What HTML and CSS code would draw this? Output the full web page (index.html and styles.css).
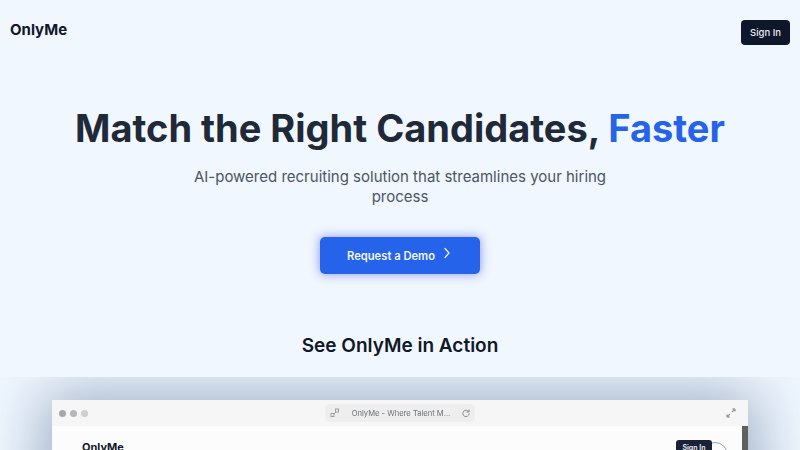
FILE: index.html
```html
<!DOCTYPE html>
<html lang="en">
<head>
<meta charset="utf-8">
<title>OnlyMe</title>
<link rel="stylesheet" href="styles.css">
</head>
<body>
<header class="topbar">
  <div class="logo">OnlyMe</div>
  <button class="signin">Sign In</button>
</header>
<main>
  <section class="hero">
    <h1>Match the Right Candidates, <span class="accent">Faster</span></h1>
    <p class="sub">AI-powered recruiting solution that streamlines your hiring process</p>
    <button class="cta"><span>Request a Demo</span>
      <svg class="chev" width="12" height="12" viewBox="0 0 12 12" fill="none" stroke="currentColor" stroke-width="1.2" stroke-linecap="round" stroke-linejoin="round"><path d="M4 1.5 8 6 4 10.5"/></svg>
    </button>
  </section>
  <h2 class="action">See OnlyMe in Action</h2>
  <section class="stage">
    <div class="window">
      <div class="chrome">
        <div class="dots"><i class="dot d1"></i><i class="dot d2"></i><i class="dot d3"></i></div>
        <div class="address">
          <svg width="10" height="10" viewBox="0 0 10 10" fill="none" stroke="#9a9ea3" stroke-width="1"><rect x="1" y="5.5" width="3" height="3"/><rect x="5.5" y="1" width="3" height="3"/><path d="M4 6 6 4"/></svg>
          <span class="addr-text">OnlyMe - Where Talent M...</span>
          <svg width="8" height="8" viewBox="0 0 10 10" fill="none" stroke="#85898e" stroke-width="1.2" stroke-linecap="round"><path d="M8.5 3.5A4 4 0 1 0 9 6"/><path d="M8.8 1v2.7H6.2"/></svg>
        </div>
        <svg class="expand" width="10" height="10" viewBox="0 0 10 10" fill="none" stroke="#9a9ea3" stroke-width="1.3"><path d="M6 4 9 1M9 1H6.5M9 1v2.5M4 6 1 9M1 9h2.5M1 9V6.5"/></svg>
      </div>
      <div class="inner">
        <div class="inner-logo">OnlyMe</div>
        <div class="inner-right">
          <span class="ring"></span>
          <button class="inner-sign">Sign In</button>
        </div>
        <span class="scroll"></span>
      </div>
    </div>
  </section>
</main>
</body>
</html>
```
FILE: styles.css
```css
* { box-sizing: border-box; }
html, body { margin: 0; padding: 0; }
body {
  width: 800px;
  height: 450px;
  overflow: hidden;
  background: #f0f7ff;
  font-family: Inter, "Liberation Sans", sans-serif;
  color: #111827;
}
.topbar {
  display: flex;
  justify-content: space-between;
  align-items: flex-start;
  padding: 20px 10px 0;
  height: 45px;
}
.logo {
  font-size: 15px;
  font-weight: 700;
  line-height: 20px;
  color: #0f172a;
}
.signin {
  width: 49px;
  height: 25px;
  padding: 0;
  border: 0;
  border-radius: 4px;
  background: #0f172a;
  color: #e8ebf0;
  font: 500 9.5px Inter, sans-serif;
}
.hero {
  display: flex;
  flex-direction: column;
  align-items: center;
  padding-top: 59px;
}
h1 {
  margin: 0;
  font-size: 38px;
  line-height: 48px;
  font-weight: 700;
  color: #1f2937;
  white-space: nowrap;
}
.accent { color: #2563eb; }
.sub {
  margin: 15px 0 0;
  width: 448px;
  text-align: center;
  font-size: 15px;
  line-height: 20px;
  color: #4b5563;
}
.cta {
  display: flex;
  align-items: center;
  justify-content: center;
  gap: 6px;
  margin-top: 30px;
  width: 160px;
  height: 37px;
  padding: 0;
  border: 0;
  border-radius: 5px;
  background: #2563eb;
  color: #f3f6fd;
  font: 600 11.2px Inter, sans-serif;
  box-shadow: 0 0 10px 1px rgba(68, 80, 245, .5);
}
.chev { margin-top: -6px; }
.action {
  margin: 60px 0 0;
  text-align: center;
  font-size: 19px;
  line-height: 24px;
  font-weight: 600;
  color: #111827;
}
.stage {
  margin-top: 19px;
  height: 73px;
  padding: 23px 52px 0;
  overflow: hidden;
}
.window {
  height: 100px;
  background: #fafafa;
  border-radius: 3px 3px 0 0;
  box-shadow: 0 4px 60px 10px rgba(40, 70, 110, .42);
}
.chrome {
  display: grid;
  grid-template-columns: 1fr 150px 1fr;
  align-items: center;
  height: 26px;
  padding: 0 7px;
  background: #f6f6f6;
  filter: blur(.3px);
}
.dots { display: flex; gap: 4px; }
.dot { width: 7px; height: 7px; border-radius: 50%; }
.d1 { background: #a5a7aa; }
.d2 { background: #b4b6b9; }
.d3 { background: #cdcfd1; }
.address {
  display: flex;
  align-items: center;
  justify-content: space-between;
  height: 18px;
  padding: 0 5px;
  border-radius: 5px;
  background: #eeeeef;
}
.addr-text { font-size: 7.6px; color: #6b7076; }
.expand { justify-self: end; margin-right: 5px; }
.inner {
  display: flex;
  justify-content: space-between;
  height: 74px;
  padding: 14px 0 0 30px;
  background: #fcfcfc;
  position: relative;
}
.inner-logo {
  font-size: 11px;
  line-height: 14px;
  font-weight: 700;
  color: #111827;
}
.inner-right {
  position: relative;
  margin-right: 36px;
}
.inner-sign {
  display: block;
  position: relative;
  width: 36px;
  height: 18px;
  padding: 0 0 3px;
  border: 0;
  border-radius: 3px;
  background: #1a2238;
  color: #f0f2f6;
  font: 600 7px Inter, sans-serif;
}
.ring {
  position: absolute;
  right: -16px;
  top: 2px;
  width: 26px;
  height: 26px;
  border-radius: 50%;
  border: 1px solid #9a9cd0;
}
.scroll {
  position: absolute;
  top: 0;
  right: 0;
  width: 6px;
  height: 74px;
  background: #5f6259;
}
```
